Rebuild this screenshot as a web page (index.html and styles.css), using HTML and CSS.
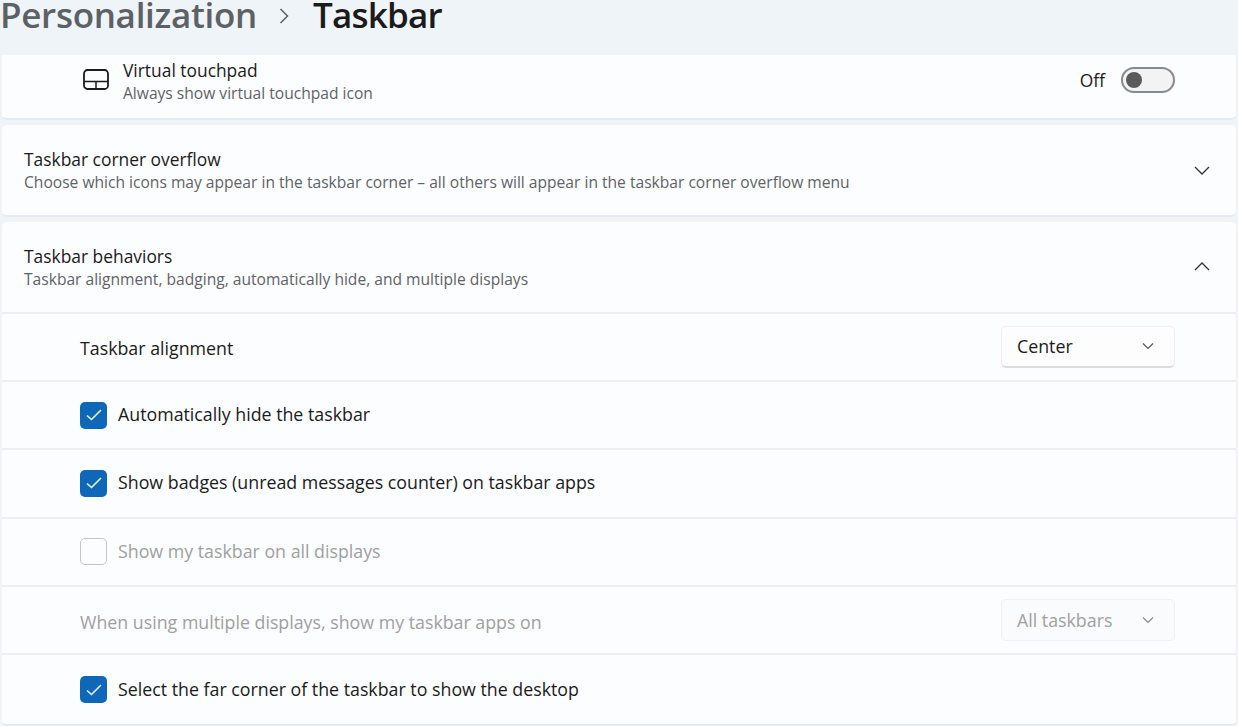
FILE: index.html
```html
<!DOCTYPE html>
<html lang="en">
<head>
    <meta charset="UTF-8">
    <meta name="viewport" content="width=device-width, initial-scale=1.0">
    <title>Taskbar</title>
    <link rel="stylesheet" href="styles.css">
</head>
<body>
    <header class="page-title">
        <span class="crumb">Personalization</span>
        <svg class="crumb-sep" width="12" height="16" viewBox="0 0 12 16"><path d="M2.500 1 9.500 8l-7 7" fill="none" stroke="#5c6166" stroke-width="1.500"/></svg>
        <span class="current">Taskbar</span>
    </header>

    <main class="cards">
        <section class="card card-clipped">
            <div class="touchpad-row">
                <svg class="row-icon" width="26" height="21" viewBox="0 0 26 21"><rect x="1" y="1" width="24" height="19" rx="3.500" fill="none" stroke="#1b1b1b" stroke-width="1.800"/><path d="M1 12.500h24M13 12.500V20" fill="none" stroke="#1b1b1b" stroke-width="1.500"/></svg>
                <div class="row-text">
                    <div class="title">Virtual touchpad</div>
                    <div class="sub">Always show virtual touchpad icon</div>
                </div>
                <span class="toggle-label">Off</span>
                <span class="toggle"><span class="knob"></span></span>
            </div>
        </section>

        <section class="card">
            <div class="expander expander-closed">
                <div class="row-text">
                    <div class="title">Taskbar corner overflow</div>
                    <div class="sub">Choose which icons may appear in the taskbar corner – all others will appear in the taskbar corner overflow menu</div>
                </div>
                <svg class="chevron" width="16" height="9" viewBox="0 0 16 9"><path d="M1 1 8 8l7-7" fill="none" stroke="#333" stroke-width="1.300"/></svg>
            </div>
        </section>

        <section class="card">
            <div class="expander">
                <div class="row-text">
                    <div class="title">Taskbar behaviors</div>
                    <div class="sub">Taskbar alignment, badging, automatically hide, and multiple displays</div>
                </div>
                <svg class="chevron" width="16" height="9" viewBox="0 0 16 9"><path d="M1 8 8 1l7 7" fill="none" stroke="#333" stroke-width="1.300"/></svg>
            </div>

            <div class="option option-tall">
                <span class="label">Taskbar alignment</span>
                <div class="select">
                    <span>Center</span>
                    <svg width="12" height="8" viewBox="0 0 12 8"><path d="M1 1.500 6 6.500l5-5" fill="none" stroke="#555" stroke-width="1.200"/></svg>
                </div>
            </div>
            <div class="option">
                <span class="check"><svg width="16" height="12" viewBox="0 0 16 12"><path d="M1 6.500 5.500 10.500 15 1" fill="none" stroke="#e6f4ff" stroke-width="1.600"/></svg></span>
                <span class="label">Automatically hide the taskbar</span>
            </div>
            <div class="option">
                <span class="check"><svg width="16" height="12" viewBox="0 0 16 12"><path d="M1 6.500 5.500 10.500 15 1" fill="none" stroke="#e6f4ff" stroke-width="1.600"/></svg></span>
                <span class="label">Show badges (unread messages counter) on taskbar apps</span>
            </div>
            <div class="option disabled">
                <span class="check check-off"></span>
                <span class="label">Show my taskbar on all displays</span>
            </div>
            <div class="option option-tall disabled">
                <span class="label">When using multiple displays, show my taskbar apps on</span>
                <div class="select select-off">
                    <span>All taskbars</span>
                    <svg width="12" height="8" viewBox="0 0 12 8"><path d="M1 1.500 6 6.500l5-5" fill="none" stroke="#888" stroke-width="1.200"/></svg>
                </div>
            </div>
            <div class="option option-last">
                <span class="check"><svg width="16" height="12" viewBox="0 0 16 12"><path d="M1 6.500 5.500 10.500 15 1" fill="none" stroke="#e6f4ff" stroke-width="1.600"/></svg></span>
                <span class="label">Select the far corner of the taskbar to show the desktop</span>
            </div>
        </section>
    </main>
</body>
</html>
```

FILE: styles.css
```css
html, body {
    height: 100%;
}

body {
    margin: 0;
    background-color: #eff4f9;
    font-family: "Open Sans", "Noto Sans", sans-serif;
    color: #1b1b1b;
    overflow: hidden;
}

.page-title {
    height: 55px;
    display: flex;
    align-items: flex-start;
    overflow: hidden;
    font-size: 35px;
    line-height: 30px;
    font-weight: 600;
    letter-spacing: -0.3px;
}

.crumb {
    color: #5c6166;
}

.crumb-sep {
    margin: 8px 23px 0 21px;
}

.current {
    color: #1b1b1b;
    letter-spacing: -0.8px;
}

.cards {
    display: flex;
    flex-direction: column;
    gap: 5px;
    padding: 0 2px;
}

.card {
    background-color: #fcfdfe;
    border-radius: 5px;
    border-bottom: 2px solid #e6ebf0;
}

.card-clipped {
    border-radius: 0 0 5px 5px;
}

.touchpad-row {
    height: 63px;
    box-sizing: border-box;
    display: flex;
    align-items: center;
    padding: 0 61px 14px 81px;
}

.row-icon {
    margin-right: 14px;
}

.row-text {
    flex: 1;
}

.touchpad-row .row-text {
    padding-top: 4px;
}

.expander .row-text {
    padding-top: 2px;
}

.title {
    font-size: 17.400px;
    line-height: 23px;
}

.sub {
    font-size: 15.600px;
    line-height: 23px;
    color: #5f6368;
}

.toggle-label {
    font-size: 17.400px;
    margin-right: 16px;
}

.toggle {
    width: 47px;
    height: 22px;
    border: 2px solid #8a8a8a;
    border-radius: 14px;
    background-color: #f3f3f3;
    display: flex;
    align-items: center;
    padding-left: 3px;
}

.knob {
    width: 16px;
    height: 16px;
    border-radius: 50%;
    background-color: #5a5a5a;
}

.expander {
    height: 91.500px;
    display: flex;
    align-items: center;
    padding: 0 26px 0 22px;
    border-bottom: 2px solid #eceff3;
    box-sizing: border-box;
}

.expander-closed {
    height: 90px;
    border-bottom: 0;
}

.option {
    height: 68.400px;
    display: flex;
    align-items: center;
    padding: 0 61px 0 78px;
    border-bottom: 2px solid #eceff3;
    box-sizing: border-box;
}

.option-last {
    border-bottom: 0;
}

.label {
    font-size: 17.800px;
    flex: 1;
    padding-bottom: 2px;
}

.option-tall .label {
    padding-top: 3px;
    padding-bottom: 0;
}

.check {
    width: 27px;
    height: 27px;
    border-radius: 5px;
    background-color: #0f67b8;
    display: flex;
    align-items: center;
    justify-content: center;
    margin-right: 11px;
    flex-shrink: 0;
}

.check-off {
    background-color: #fcfdfe;
    border: 1px solid #c4c4c4;
    box-sizing: border-box;
}

.disabled .label {
    color: #a0a0a0;
}

.select {
    width: 174px;
    height: 42px;
    box-sizing: border-box;
    display: flex;
    align-items: center;
    justify-content: space-between;
    padding: 0 20px 0 15px;
    font-size: 17.800px;
    background-color: #fdfdfd;
    border: 1px solid #eeeeee;
    border-bottom: 2px solid #dcdcdc;
    border-radius: 5px;
}

.select-off {
    background-color: #fafbfc;
    color: #a0a0a0;
    border: 1px solid #eef0f2;
}
```
